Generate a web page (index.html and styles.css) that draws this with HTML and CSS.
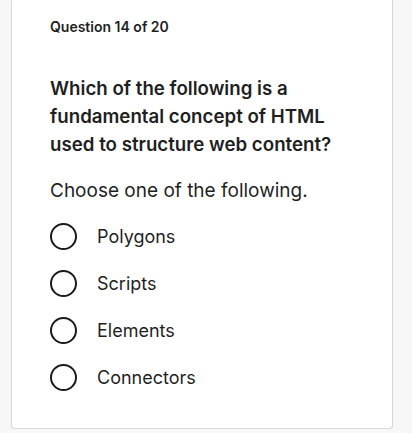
FILE: index.html
```html
<!DOCTYPE html>
<html lang="en">
<head>
    <meta charset="UTF-8">
    <meta name="viewport" content="width=device-width, initial-scale=1.0">
    <title>Quiz</title>
    <link rel="stylesheet" href="styles.css">
</head>
<body>

    <div class="card">
        <p class="counter">Question 14 of 20</p>

        <h2 class="question">Which of the following is a fundamental concept of HTML used to structure web content?</h2>

        <p class="hint">Choose one of the following.</p>

        <ul class="options">
            <li class="option"><span class="radio"></span>Polygons</li>
            <li class="option"><span class="radio"></span>Scripts</li>
            <li class="option"><span class="radio"></span>Elements</li>
            <li class="option"><span class="radio"></span>Connectors</li>
        </ul>
    </div>

</body>
</html>
```

FILE: styles.css
```css
* {
    margin: 0;
    padding: 0;
    box-sizing: border-box;
}
body {
    background-color: #f7f7f7;
    font-family: Inter, "Noto Sans", sans-serif;
    color: #1f1f1f;
}
.card {
    width: 382px;
    margin-left: 11px;
    background-color: #fff;
    border: 1px solid #d9d9d9;
    border-top: none;
    border-radius: 0 0 4px 4px;
    box-shadow: 0 1px 2px rgba(0, 0, 0, 0.06);
    padding: 17px 20px 27px 38px;
}
.counter {
    font-size: 14px;
    font-weight: 600;
    line-height: 20px;
}
.question {
    margin-top: 38px;
    font-size: 18.7px;
    font-weight: 600;
    line-height: 28px;
    width: 290px;
}
.hint {
    margin-top: 18px;
    font-size: 19px;
    line-height: 28px;
}
.options {
    list-style: none;
    margin-top: 8px;
}
/* each answer row: circle then label */
.option {
    display: flex;
    align-items: center;
    height: 47px;
    font-size: 18px;
}
.radio {
    width: 27px;
    height: 27px;
    border: 2.4px solid #1a1a1a;
    border-radius: 50%;
    margin-right: 20px;
    flex-shrink: 0;
}
```
